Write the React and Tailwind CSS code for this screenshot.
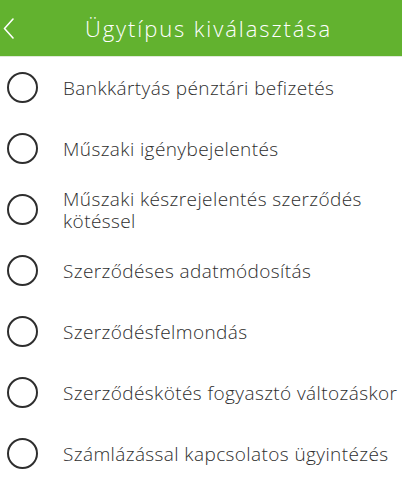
import React from "react";

const items = [
  "Bankkártyás pénztári befizetés",
  "Műszaki igénybejelentés",
  "Műszaki készrejelentés szerződés kötéssel",
  "Szerződéses adatmódosítás",
  "Szerződésfelmondás",
  "Szerződéskötés fogyasztó változáskor",
  "Számlázással kapcsolatos ügyintézés",
];

export default function App() {
  return (
    <div className="w-[402px] h-[480px] overflow-hidden bg-white" style={{ fontFamily: '"Open Sans", "Noto Sans", sans-serif' }}>
      <div className="h-[56px] bg-[#62b22f] flex items-center relative">
        <svg className="absolute left-[3px] top-[18px]" width="11" height="21" viewBox="0 0 11 21" fill="none">
          <path d="M10 1 L1.5 10.5 L10 20" stroke="#ffffff" strokeWidth="1.6" strokeLinecap="round" strokeLinejoin="round" />
        </svg>
        <div className="flex-1 pl-[85px] text-white text-[22px] font-light tracking-[1.9px] leading-none">Ügytípus kiválasztása</div>
      </div>
      <div className="h-px bg-[#dfe9d8]" />
      <div className="flex flex-col">
        {items.map((t) => (
          <div key={t} className="h-[61px] flex items-center">
            <div className="w-[31px] h-[31px] ml-[7px] rounded-full border-[2px] border-[#2e2e2e] shrink-0" />
            <div className="ml-[25px] pr-1 text-[19px] font-light tracking-[0.4px] leading-[22px] text-[#2e2e2e]">{t}</div>
          </div>
        ))}
      </div>
    </div>
  );
}
